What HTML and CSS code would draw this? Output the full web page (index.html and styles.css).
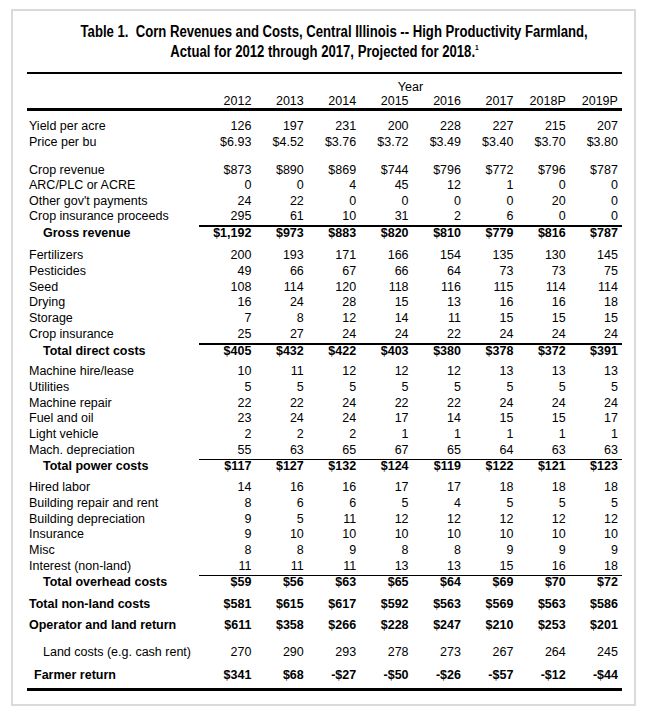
FILE: index.html
```html
<!DOCTYPE html>
<html lang="en">
<head>
<meta charset="utf-8">
<title>Table 1. Corn Revenues and Costs</title>
<link rel="stylesheet" href="styles.css">
</head>
<body>
<div class="frame">
  <div class="sheet">
    <div class="title">
      <div class="tline">Table 1.&nbsp; Corn Revenues and Costs, Central Illinois -- High Productivity Farmland,</div>
      <div class="tline">Actual for 2012 through 2017, Projected for 2018.<sup>1</sup></div>
    </div>
    <div class="rule-top"></div>
    <div class="row head"><span class="lbl"></span><span class="year-label">Year</span></div>
    <div class="row head"><span class="lbl"></span><span class="v">2012</span><span class="v">2013</span><span class="v">2014</span><span class="v">2015</span><span class="v">2016</span><span class="v">2017</span><span class="v">2018P</span><span class="v">2019P</span></div>
    <div class="rule-thick"></div>

    <div class="grp g1">
      <div class="row"><span class="lbl">Yield per acre</span><span class="v">126</span><span class="v">197</span><span class="v">231</span><span class="v">200</span><span class="v">228</span><span class="v">227</span><span class="v">215</span><span class="v">207</span></div>
      <div class="row"><span class="lbl">Price per bu</span><span class="v">$6.93</span><span class="v">$4.52</span><span class="v">$3.76</span><span class="v">$3.72</span><span class="v">$3.49</span><span class="v">$3.40</span><span class="v">$3.70</span><span class="v">$3.80</span></div>
    </div>

    <div class="grp g2">
      <div class="row tight"><span class="lbl">Crop revenue</span><span class="v">$873</span><span class="v">$890</span><span class="v">$869</span><span class="v">$744</span><span class="v">$796</span><span class="v">$772</span><span class="v">$796</span><span class="v">$787</span></div>
      <div class="row tight"><span class="lbl">ARC/PLC or ACRE</span><span class="v">0</span><span class="v">0</span><span class="v">4</span><span class="v">45</span><span class="v">12</span><span class="v">1</span><span class="v">0</span><span class="v">0</span></div>
      <div class="row tight"><span class="lbl">Other gov't payments</span><span class="v">24</span><span class="v">22</span><span class="v">0</span><span class="v">0</span><span class="v">0</span><span class="v">0</span><span class="v">20</span><span class="v">0</span></div>
      <div class="row tight"><span class="lbl">Crop insurance proceeds</span><span class="v">295</span><span class="v">61</span><span class="v">10</span><span class="v">31</span><span class="v">2</span><span class="v">6</span><span class="v">0</span><span class="v">0</span></div>
      <div class="row sub sub2"><span class="lbl ind">Gross revenue</span><span class="v">$1,192</span><span class="v">$973</span><span class="v">$883</span><span class="v">$820</span><span class="v">$810</span><span class="v">$779</span><span class="v">$816</span><span class="v">$787</span></div>
    </div>

    <div class="grp g3">
      <div class="row"><span class="lbl">Fertilizers</span><span class="v">200</span><span class="v">193</span><span class="v">171</span><span class="v">166</span><span class="v">154</span><span class="v">135</span><span class="v">130</span><span class="v">145</span></div>
      <div class="row"><span class="lbl">Pesticides</span><span class="v">49</span><span class="v">66</span><span class="v">67</span><span class="v">66</span><span class="v">64</span><span class="v">73</span><span class="v">73</span><span class="v">75</span></div>
      <div class="row"><span class="lbl">Seed</span><span class="v">108</span><span class="v">114</span><span class="v">120</span><span class="v">118</span><span class="v">116</span><span class="v">115</span><span class="v">114</span><span class="v">114</span></div>
      <div class="row"><span class="lbl">Drying</span><span class="v">16</span><span class="v">24</span><span class="v">28</span><span class="v">15</span><span class="v">13</span><span class="v">16</span><span class="v">16</span><span class="v">18</span></div>
      <div class="row"><span class="lbl">Storage</span><span class="v">7</span><span class="v">8</span><span class="v">12</span><span class="v">14</span><span class="v">11</span><span class="v">15</span><span class="v">15</span><span class="v">15</span></div>
      <div class="row"><span class="lbl">Crop insurance</span><span class="v">25</span><span class="v">27</span><span class="v">24</span><span class="v">24</span><span class="v">22</span><span class="v">24</span><span class="v">24</span><span class="v">24</span></div>
      <div class="row sub sub2"><span class="lbl ind">Total direct costs</span><span class="v">$405</span><span class="v">$432</span><span class="v">$422</span><span class="v">$403</span><span class="v">$380</span><span class="v">$378</span><span class="v">$372</span><span class="v">$391</span></div>
    </div>

    <div class="grp g4">
      <div class="row"><span class="lbl">Machine hire/lease</span><span class="v">10</span><span class="v">11</span><span class="v">12</span><span class="v">12</span><span class="v">12</span><span class="v">13</span><span class="v">13</span><span class="v">13</span></div>
      <div class="row"><span class="lbl">Utilities</span><span class="v">5</span><span class="v">5</span><span class="v">5</span><span class="v">5</span><span class="v">5</span><span class="v">5</span><span class="v">5</span><span class="v">5</span></div>
      <div class="row"><span class="lbl">Machine repair</span><span class="v">22</span><span class="v">22</span><span class="v">24</span><span class="v">22</span><span class="v">22</span><span class="v">24</span><span class="v">24</span><span class="v">24</span></div>
      <div class="row"><span class="lbl">Fuel and oil</span><span class="v">23</span><span class="v">24</span><span class="v">24</span><span class="v">17</span><span class="v">14</span><span class="v">15</span><span class="v">15</span><span class="v">17</span></div>
      <div class="row"><span class="lbl">Light vehicle</span><span class="v">2</span><span class="v">2</span><span class="v">2</span><span class="v">1</span><span class="v">1</span><span class="v">1</span><span class="v">1</span><span class="v">1</span></div>
      <div class="row"><span class="lbl">Mach. depreciation</span><span class="v">55</span><span class="v">63</span><span class="v">65</span><span class="v">67</span><span class="v">65</span><span class="v">64</span><span class="v">63</span><span class="v">63</span></div>
      <div class="row sub sub1"><span class="lbl ind">Total power costs</span><span class="v">$117</span><span class="v">$127</span><span class="v">$132</span><span class="v">$124</span><span class="v">$119</span><span class="v">$122</span><span class="v">$121</span><span class="v">$123</span></div>
    </div>

    <div class="grp g5">
      <div class="row"><span class="lbl">Hired labor</span><span class="v">14</span><span class="v">16</span><span class="v">16</span><span class="v">17</span><span class="v">17</span><span class="v">18</span><span class="v">18</span><span class="v">18</span></div>
      <div class="row"><span class="lbl">Building repair and rent</span><span class="v">8</span><span class="v">6</span><span class="v">6</span><span class="v">5</span><span class="v">4</span><span class="v">5</span><span class="v">5</span><span class="v">5</span></div>
      <div class="row"><span class="lbl">Building depreciation</span><span class="v">9</span><span class="v">5</span><span class="v">11</span><span class="v">12</span><span class="v">12</span><span class="v">12</span><span class="v">12</span><span class="v">12</span></div>
      <div class="row"><span class="lbl">Insurance</span><span class="v">9</span><span class="v">10</span><span class="v">10</span><span class="v">10</span><span class="v">10</span><span class="v">10</span><span class="v">10</span><span class="v">10</span></div>
      <div class="row"><span class="lbl">Misc</span><span class="v">8</span><span class="v">8</span><span class="v">9</span><span class="v">8</span><span class="v">8</span><span class="v">9</span><span class="v">9</span><span class="v">9</span></div>
      <div class="row"><span class="lbl">Interest (non-land)</span><span class="v">11</span><span class="v">11</span><span class="v">11</span><span class="v">13</span><span class="v">13</span><span class="v">15</span><span class="v">16</span><span class="v">18</span></div>
      <div class="row sub sub1"><span class="lbl ind">Total overhead costs</span><span class="v">$59</span><span class="v">$56</span><span class="v">$63</span><span class="v">$65</span><span class="v">$64</span><span class="v">$69</span><span class="v">$70</span><span class="v">$72</span></div>
    </div>

    <div class="row bold r-nonland"><span class="lbl">Total non-land costs</span><span class="v">$581</span><span class="v">$615</span><span class="v">$617</span><span class="v">$592</span><span class="v">$563</span><span class="v">$569</span><span class="v">$563</span><span class="v">$586</span></div>
    <div class="row bold r-oper"><span class="lbl">Operator and land return</span><span class="v">$611</span><span class="v">$358</span><span class="v">$266</span><span class="v">$228</span><span class="v">$247</span><span class="v">$210</span><span class="v">$253</span><span class="v">$201</span></div>
    <div class="row r-land"><span class="lbl land">Land costs (e.g. cash rent)</span><span class="v">270</span><span class="v">290</span><span class="v">293</span><span class="v">278</span><span class="v">273</span><span class="v">267</span><span class="v">264</span><span class="v">245</span></div>
    <div class="row bold r-farmer"><span class="lbl farmer">Farmer return</span><span class="v">$341</span><span class="v">$68</span><span class="v">-$27</span><span class="v">-$50</span><span class="v">-$26</span><span class="v">-$57</span><span class="v">-$12</span><span class="v">-$44</span></div>
    <div class="rule-bottom"></div>
  </div>
</div>
</body>
</html>
```

FILE: styles.css
```css
html, body {
  margin: 0;
  padding: 0;
  background: #fff;
}

body {
  font-family: "Liberation Sans", Arial, sans-serif;
  font-size: 12.5px;
  color: #000;
}

.frame {
  box-sizing: border-box;
  width: 625px;
  height: 697px;
  margin: 9px 0 0 11px;
  border: 2px solid #dadada;
  padding: 11px 12px 0 14px;
}

.sheet {
  width: 595px;
}

.title {
  font-family: "Liberation Sans", Arial, sans-serif;
  font-weight: bold;
  font-size: 16px;
  line-height: 20px;
  text-align: center;
}

.tline {
  white-space: nowrap;
  transform: scaleX(0.82);
  transform-origin: 50% 50%;
}

.title sup {
  font-size: 8px;
  line-height: 0;
  vertical-align: 7px;
}

.rule-top {
  border-top: 2px solid #000;
  margin-top: 10px;
}

.rule-thick {
  border-top: 3px solid #000;
}

.rule-bottom {
  border-top: 3px solid #000;
  margin-top: 4.5px;
}

.row {
  display: grid;
  grid-template-columns: 172px repeat(7, 52.4px) 56.2px;
  height: 15.8px;
  line-height: 15.8px;
  white-space: nowrap;
}

.row.head {
  height: 14px;
  line-height: 14px;
}

.rule-top + .row.head {
  margin-top: 6px;
}

.year-label {
  grid-column: 2 / -1;
  text-align: center;
}

.lbl {
  padding-left: 2px;
}

.lbl.ind {
  padding-left: 16px;
}

.lbl.land {
  padding-left: 16px;
}

.lbl.farmer {
  padding-left: 7px;
}

.v {
  text-align: right;
}

.v:last-child {
  padding-right: 4px;
}

.row.tight {
  height: 15.4px;
  line-height: 15.4px;
}

.row.sub {
  font-weight: bold;
}

.row.sub > span {
  border-top-style: solid;
  border-top-color: transparent;
}

.row.sub > .v {
  border-top-color: #000;
}

.row.sub2 {
  height: 14px;
  line-height: 12px;
}

.row.sub2 > span {
  border-top-width: 2px;
}

.row.sub1 {
  height: 14px;
  line-height: 13px;
}

.row.sub1 > span {
  border-top-width: 1px;
}

.row.bold {
  font-weight: bold;
}

.g1 { margin-top: 8px; }
.g2 { margin-top: 12.5px; }
.g3 { margin-top: 9.4px; }
.g4 { margin-top: 7.2px; }
.g5 { margin-top: 7.2px; }

.r-nonland { margin-top: 8.2px; }
.r-oper { margin-top: 5.2px; }
.r-land { margin-top: 11.2px; }
.r-farmer { margin-top: 7.2px; }
```
